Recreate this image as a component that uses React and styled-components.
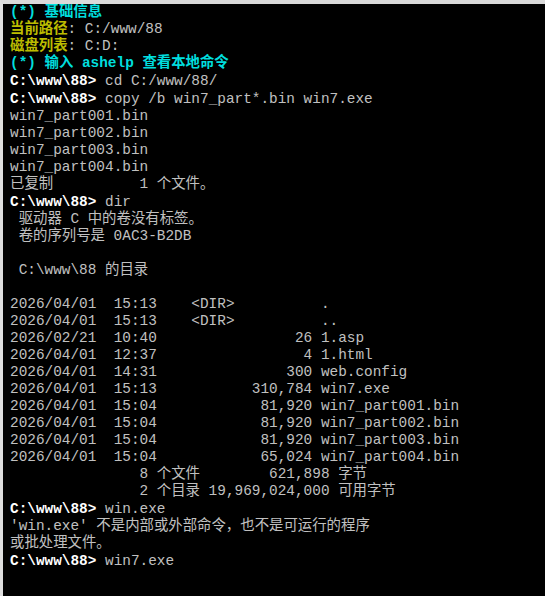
import React from "react";
import styled, { createGlobalStyle } from "styled-components";

const Global = createGlobalStyle`
  html, body { margin: 0; padding: 0; background: #000; }
  body { overflow: hidden; }
`;

const Frame = styled.div`
  box-sizing: border-box;
  width: 545px;
  height: 596px;
  background: #000;
  border-top: 4px solid #d9d9d9;
  border-left: 3px solid #dedede;
  padding: 0 0 0 7px;
  font-family: "Liberation Mono", "Courier New", "Noto Sans CJK SC", monospace;
  font-size: 14.4px;
  line-height: 17px;
  color: #c0c0c0;
  overflow: hidden;
`;

const Line = styled.div`
  white-space: pre;
  height: ${(p) => (p.$prompt ? "18px" : "17px")};
  line-height: ${(p) => (p.$prompt ? "18px" : "17px")};
  color: ${(p) => p.$color || "#c0c0c0"};
  font-weight: ${(p) => (p.$bold ? 700 : 400)};
`;

const Label = styled.span`
  color: #bcbc00;
  font-weight: 700;
`;

const Prompt = styled.span`
  color: #ffffff;
  font-weight: 700;
`;

const CYAN = "#00dede";

const Cmd = ({ children }) => (
  <Line $prompt>
    <Prompt>C:\www\88&gt;</Prompt> {children}
  </Line>
);

const dirRows = [
  "2026/04/01  15:13    <DIR>          .",
  "2026/04/01  15:13    <DIR>          ..",
  "2026/02/21  10:40                26 1.asp",
  "2026/04/01  12:37                 4 1.html",
  "2026/04/01  14:31               300 web.config",
  "2026/04/01  15:13           310,784 win7.exe",
  "2026/04/01  15:04            81,920 win7_part001.bin",
  "2026/04/01  15:04            81,920 win7_part002.bin",
  "2026/04/01  15:04            81,920 win7_part003.bin",
  "2026/04/01  15:04            65,024 win7_part004.bin",
];

export default function App() {
  return (
    <>
      <Global />
      <Frame>
        <Line $color={CYAN} $bold>(*) 基础信息</Line>
        <Line>
          <Label>当前路径</Label>: C:/www/88
        </Line>
        <Line>
          <Label>磁盘列表</Label>: C:D:
        </Line>
        <Line $color={CYAN} $bold>(*) 输入 ashelp 查看本地命令</Line>
        <Cmd>cd C:/www/88/</Cmd>
        <Cmd>copy /b win7_part*.bin win7.exe</Cmd>
        <Line>win7_part001.bin</Line>
        <Line>win7_part002.bin</Line>
        <Line>win7_part003.bin</Line>
        <Line>win7_part004.bin</Line>
        <Line>{"已复制          1 个文件。"}</Line>
        <Cmd>dir</Cmd>
        <Line>{" 驱动器 C 中的卷没有标签。"}</Line>
        <Line>{" 卷的序列号是 0AC3-B2DB"}</Line>
        <Line> </Line>
        <Line>{" C:\\www\\88 的目录"}</Line>
        <Line> </Line>
        {dirRows.map((r, i) => (
          <Line key={i}>{r}</Line>
        ))}
        <Line>{"               8 个文件        621,898 字节"}</Line>
        <Line>{"               2 个目录 19,969,024,000 可用字节"}</Line>
        <Cmd>win.exe</Cmd>
        <Line>{"'win.exe' 不是内部或外部命令，也不是可运行的程序"}</Line>
        <Line>或批处理文件。</Line>
        <Cmd>win7.exe</Cmd>
      </Frame>
    </>
  );
}
